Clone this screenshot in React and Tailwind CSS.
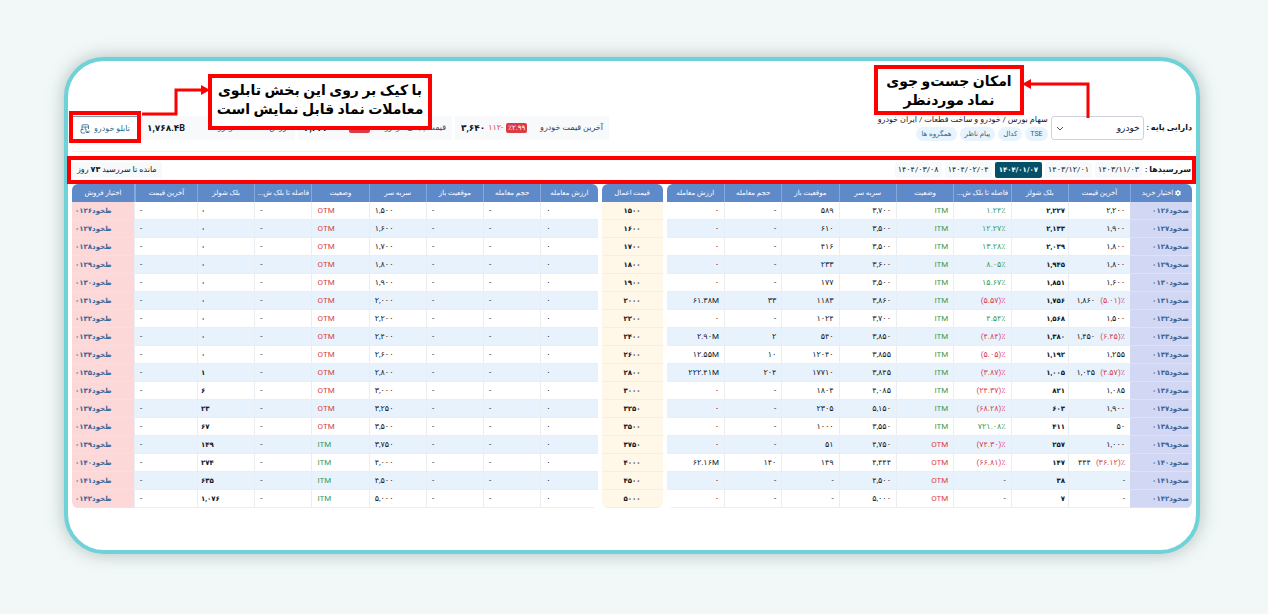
import { FaGear } from 'react-icons/fa6';

const columns = [
  'آخرین قیمت',
  'بلک شولز',
  'فاصله تا بلک ش...',
  'وضعیت',
  'سربه سر',
  'موقعیت باز',
  'حجم معامله',
  'ارزش معامله',
];

// code, last price, last change, black-scholes, distance, status, break even, open interest, volume, value
const calls = [
  ['۰۱۲۶', '۲,۲۰۰', '', '۲,۲۲۷', '۱.۲۴٪', 'ITM', '۳,۷۰۰', '۵۸۹', '-', '۰'],
  ['۰۱۲۷', '۱,۹۰۰', '', '۲,۱۳۳', '۱۲.۲۷٪', 'ITM', '۳,۵۰۰', '۶۱۰', '-', '۰'],
  ['۰۱۲۸', '۱,۸۰۰', '', '۲,۰۳۹', '۱۳.۲۸٪', 'ITM', '۳,۵۰۰', '۴۱۶', '-', '۰'],
  ['۰۱۲۹', '۱,۸۰۰', '', '۱,۹۴۵', '۸.۰۵٪', 'ITM', '۳,۶۰۰', '۲۳۳', '-', '۰'],
  ['۰۱۳۰', '۱,۶۰۰', '', '۱,۸۵۱', '۱۵.۶۷٪', 'ITM', '۳,۵۰۰', '۱۷۷', '-', '۰'],
  ['۰۱۳۱', '۱,۸۶۰', '(۵.۰۱)٪', '۱,۷۵۶', '(۵.۵۷)٪', 'ITM', '۳,۸۶۰', '۱۱۸۳', '۳۳', '۶۱.۳۸M'],
  ['۰۱۳۲', '۱,۵۰۰', '', '۱,۵۶۸', '۴.۵۴٪', 'ITM', '۳,۷۰۰', '۱۰۲۴', '-', '۰'],
  ['۰۱۳۳', '۱,۴۵۰', '(۶.۴۵)٪', '۱,۳۸۰', '(۴.۸۴)٪', 'ITM', '۳,۸۵۰', '۵۴۰', '۲', '۲.۹۰M'],
  ['۰۱۳۴', '۱,۲۵۵', '', '۱,۱۹۲', '(۵.۰۵)٪', 'ITM', '۳,۸۵۵', '۱۲۰۴۰', '۱۰', '۱۲.۵۵M'],
  ['۰۱۳۵', '۱,۰۴۵', '(۴.۵۷)٪', '۱,۰۰۵', '(۳.۸۷)٪', 'ITM', '۳,۸۴۵', '۱۷۷۱۰', '۲۰۴', '۲۲۲.۴۱M'],
  ['۰۱۳۶', '۱,۰۸۵', '', '۸۲۱', '(۲۴.۳۷)٪', 'ITM', '۴,۰۸۵', '۱۸۰۴', '-', '۰'],
  ['۰۱۳۷', '۱,۹۰۰', '', '۶۰۳', '(۶۸.۲۸)٪', 'ITM', '۵,۱۵۰', '۲۳۰۵', '-', '۰'],
  ['۰۱۳۸', '۵۰', '', '۴۱۱', '۷۲۱.۰۸٪', 'ITM', '۳,۵۵۰', '۱۰۰۰', '-', '۰'],
  ['۰۱۳۹', '۱,۰۰۰', '', '۲۵۷', '(۷۴.۳۰)٪', 'OTM', '۴,۷۵۰', '۵۱', '-', '۰'],
  ['۰۱۴۰', '۴۴۴', '(۳۶.۱۲)٪', '۱۴۷', '(۶۶.۸۱)٪', 'OTM', '۴,۴۴۴', '۱۴۹', '۱۴۰', '۶۲.۱۶M'],
  ['۰۱۴۱', '-', '', '۳۸', '-', 'OTM', '۴,۵۰۰', '-', '-', '۰'],
  ['۰۱۴۲', '-', '', '۷', '-', 'OTM', '۵,۰۰۰', '-', '-', '۰'],
];

const strikes = [
  '۱۵۰۰', '۱۶۰۰', '۱۷۰۰', '۱۸۰۰', '۱۹۰۰', '۲۰۰۰', '۲۲۰۰', '۲۴۰۰', '۲۶۰۰',
  '۲۸۰۰', '۳۰۰۰', '۳۲۵۰', '۳۵۰۰', '۳۷۵۰', '۴۰۰۰', '۴۵۰۰', '۵۰۰۰',
];

// code, black-scholes, status, break even
const puts = [
  ['۰۱۲۶', '۰', 'OTM', '۱,۵۰۰'],
  ['۰۱۲۷', '۰', 'OTM', '۱,۶۰۰'],
  ['۰۱۲۸', '۰', 'OTM', '۱,۷۰۰'],
  ['۰۱۲۹', '۰', 'OTM', '۱,۸۰۰'],
  ['۰۱۳۰', '۰', 'OTM', '۱,۹۰۰'],
  ['۰۱۳۱', '۰', 'OTM', '۲,۰۰۰'],
  ['۰۱۳۲', '۰', 'OTM', '۲,۲۰۰'],
  ['۰۱۳۳', '۰', 'OTM', '۲,۴۰۰'],
  ['۰۱۳۴', '۰', 'OTM', '۲,۶۰۰'],
  ['۰۱۳۵', '۱', 'OTM', '۲,۸۰۰'],
  ['۰۱۳۶', '۶', 'OTM', '۳,۰۰۰'],
  ['۰۱۳۷', '۲۳', 'OTM', '۳,۲۵۰'],
  ['۰۱۳۸', '۶۷', 'OTM', '۳,۵۰۰'],
  ['۰۱۳۹', '۱۴۹', 'ITM', '۳,۷۵۰'],
  ['۰۱۴۰', '۲۷۴', 'ITM', '۴,۰۰۰'],
  ['۰۱۴۱', '۶۳۵', 'ITM', '۴,۵۰۰'],
  ['۰۱۴۲', '۱,۰۷۶', 'ITM', '۵,۰۰۰'],
];

const dates = ['۱۴۰۳/۱۱/۰۳', '۱۴۰۳/۱۲/۰۱', '۱۴۰۴/۰۱/۰۷', '۱۴۰۴/۰۲/۰۴', '۱۴۰۴/۰۳/۰۸'];

const statusColor = (status) => (status === 'ITM' ? 'text-[#3f9a53]' : 'text-[#d9414e]');

function distanceColor(value) {
  if (value === '-') return 'text-gray-800';
  return value.startsWith('(') ? 'text-[#d9414e]' : 'text-[#3f9a53]';
}

function HeadCell({ className = '', children }) {
  return (
    <th scope="col" className={`h-[18px] border-l border-[#86a8dc] p-0 text-center font-normal last:border-l-0 ${className}`}>
      {children}
    </th>
  );
}

function Cell({ className = 'px-[5px]', children }) {
  return (
    <td className={`h-[18px] border-b border-l border-[#e9eef2] py-0 last:border-l-0 ${className}`}>
      <span dir="ltr">{children}</span>
    </td>
  );
}

function CallTable() {
  return (
    <div className="min-w-0 flex-1 overflow-hidden rounded-md">
      <table className="w-full table-fixed border-separate border-spacing-0 whitespace-nowrap text-right">
        <thead className="bg-[#5e8aca] text-[7px] text-white">
          <tr>
            <HeadCell className="w-[62px]">
              <span className="flex items-center justify-center gap-[2px]">
                <FaGear className="size-[6px]" />
                اختیار خرید
              </span>
            </HeadCell>
            <HeadCell className="w-[62px]">{columns[0]}</HeadCell>
            {columns.slice(1).map((column) => (
              <HeadCell key={column}>{column}</HeadCell>
            ))}
          </tr>
        </thead>
        <tbody>
          {calls.map(([code, last, change, bs, distance, status, even, open, volume, value]) => (
            <tr key={code} className="even:bg-[#e8f2fd]">
              <th scope="row" className="h-[18px] border-b border-[#dde3f6] bg-[#d2d8f4] px-[3px] py-0 text-right text-[7px] font-bold text-[#3b6596]">
                ضخود{code}
              </th>
              <Cell>
                {last}
                {change && <span className="ml-[5px] text-[#d9414e]">{change}</span>}
              </Cell>
              <Cell className="px-[3px] text-[7px] font-bold">{bs}</Cell>
              <Cell className={`px-[5px] ${distanceColor(distance)}`}>{distance}</Cell>
              <Cell className={`px-[5px] ${statusColor(status)}`}>{status}</Cell>
              <Cell>{even}</Cell>
              <Cell>{open}</Cell>
              <Cell>{volume}</Cell>
              <Cell>{value}</Cell>
            </tr>
          ))}
        </tbody>
      </table>
    </div>
  );
}

function StrikeTable() {
  return (
    <div className="w-[61px] shrink-0 overflow-hidden rounded-md">
      <table className="w-full table-fixed border-separate border-spacing-0 text-center text-[7px]">
        <thead className="bg-[#5e8aca] text-white">
          <tr>
            <HeadCell>قیمت اعمال</HeadCell>
          </tr>
        </thead>
        <tbody>
          {strikes.map((strike) => (
            <tr key={strike}>
              <td className="h-[18px] border-b border-[#f3efe6] bg-[#fff7e8] p-0 font-bold">{strike}</td>
            </tr>
          ))}
        </tbody>
      </table>
    </div>
  );
}

function PutTable() {
  return (
    <div className="min-w-0 flex-1 overflow-hidden rounded-md">
      <table className="w-full table-fixed border-separate border-spacing-0 whitespace-nowrap text-left">
        <thead className="bg-[#5e8aca] text-[7px] text-white">
          <tr>
            {columns.slice(1).reverse().map((column) => (
              <HeadCell key={column}>{column}</HeadCell>
            ))}
            <HeadCell className="w-[63px] border-l-2">{columns[0]}</HeadCell>
            <HeadCell className="w-[62px]">اختیار فروش</HeadCell>
          </tr>
        </thead>
        <tbody>
          {puts.map(([code, bs, status, even]) => (
            <tr key={code} className="even:bg-[#e8f2fd]">
              <Cell>۰</Cell>
              <Cell>-</Cell>
              <Cell>-</Cell>
              <Cell>{even}</Cell>
              <Cell className={`px-[5px] ${statusColor(status)}`}>{status}</Cell>
              <Cell>-</Cell>
              <Cell className="px-[3px] text-[7px] font-bold">{bs}</Cell>
              <Cell>-</Cell>
              <th scope="row" className="h-[18px] border-b border-[#f5dfe2] bg-[#fdd8d9] px-[3px] py-0 text-left text-[7px] font-bold text-[#3b6596]">
                طخود{code}
              </th>
            </tr>
          ))}
        </tbody>
      </table>
    </div>
  );
}

function PriceBox({ label, value, change, percent }) {
  return (
    <div className="flex h-6 w-[154px] items-center justify-between bg-[#f7f9fb] px-[6px]">
      <span className="text-[8px] text-gray-700">{label}</span>
      <span dir="ltr" className="flex items-center gap-[3px]">
        <b className="text-[9px]">{value}</b>
        {change && <span className="text-[8px] text-[#d9414e]">{change}</span>}
        {percent && (
          <span className="flex h-[10px] items-center rounded-[2px] bg-[#dc3a44] px-[2px] text-[7px] text-white">
            {percent}
          </span>
        )}
      </span>
    </div>
  );
}

function BoardIcon() {
  return (
    <svg viewBox="0 0 20 20" className="size-[10px]" fill="none" stroke="currentColor" strokeWidth="1.6" aria-hidden="true">
      <path d="M4 11V3.500Q4 1.500 6 1.500H15Q17 1.500 17 3.500V10M4 6H17M10.500 6V11M7 11H2V16Q2 18 4 18H10" />
      <path d="M12 10v7M12 17h6M18 17v-4M15 17v-3" />
    </svg>
  );
}

export default function App() {
  return (
    <div dir="rtl" className="min-h-screen bg-[#f2f8f8] px-16 pt-[57px] pb-[61px] font-[Roboto,'DejaVu_Sans',sans-serif] text-[8px] leading-[10px] text-gray-900 lg:pr-[68px]">
      <main className="relative rounded-[40px] border-4 border-[#6fd2d8] bg-white px-1 pt-[54px] pb-[42px] shadow-[0_0_18px_rgba(80,100,100,0.4)]">
        <header className="flex items-center gap-[3px] border-b border-[#eef0f2] pb-[10px]">
          <label htmlFor="asset" className="text-[8px] font-bold">دارایی پایه :</label>
          <div className="relative">
            <select id="asset" className="h-6 w-[93px] appearance-none rounded-[3px] border border-[#cfd2dc] bg-white px-[3px] text-[9px]">
              <option>خودرو</option>
            </select>
            <svg viewBox="0 0 8 5" className="pointer-events-none absolute top-[10px] left-[5px] h-[5px] w-2" fill="none" stroke="#555" aria-hidden="true">
              <path d="M1 1l3 3 3-3" />
            </svg>
          </div>
          <div className="flex flex-col gap-[2px]">
            <span className="text-[8px]">سهام بورس / خودرو و ساخت قطعات / ایران خودرو</span>
            <nav className="flex gap-[3px] text-[7px] text-[#2c6280]">
              <a href="#tse" className="rounded-full bg-[#e8f4fd] px-[5px] py-[2px]">TSE</a>
              <a href="#codal" className="rounded-full bg-[#e8f4fd] px-[5px] py-[2px]">کدال</a>
              <a href="#messages" className="rounded-full bg-[#e8f4fd] px-[5px] py-[2px]">پیام ناظر</a>
              <a href="#peers" className="rounded-full bg-[#e8f4fd] px-[5px] py-[2px]">همگروه ها</a>
            </nav>
          </div>
          <div className="mr-auto flex items-center gap-[3px]">
            <PriceBox label="آخرین قیمت خودرو" value="۳,۶۴۰" change="۱۱۲-" percent="٪۲.۹۹" />
            <PriceBox label="قیمت پایانی خودرو" value="۳,۶۴۲" change="۱۱۰-" percent="٪۲.۹۳" />
            <PriceBox label="ارزش معاملات خودرو" value="۱,۷۶۸.۴B" />
            <button type="button" className="flex h-6 w-[66px] items-center justify-center gap-1 border-t border-[#6f9fb0] bg-white text-[8px] text-[#2b6a85]">
              تابلو خودرو
              <BoardIcon />
            </button>
          </div>
        </header>

        <section className="-mr-1 mt-[4px] -ml-[5px] flex h-7 items-center gap-[3px] border-4 border-[#fe0000] px-[1px]">
          <h2 className="text-[8px] font-bold">سررسیدها :</h2>
          {dates.map((date) => (
            <button
              key={date}
              type="button"
              className={
                date === '۱۴۰۴/۰۱/۰۷'
                  ? 'h-4 rounded-[2px] bg-[#064f69] px-1 text-[7px] font-bold text-white'
                  : 'h-4 rounded-[2px] bg-[#f7f9fb] px-[3px] text-[8px]'
              }
            >
              {date}
            </button>
          ))}
          <span className="mr-auto bg-[#f7f9fb] px-[5px] py-[3px] text-[8px]">
            مانده تا سررسید <b>۷۳</b> روز
          </span>
        </section>

        <section className="flex gap-1">
          <CallTable />
          <StrikeTable />
          <PutTable />
        </section>

        {/* Guide callouts */}
        <div className="absolute top-[50px] left-[1px] h-8 w-[72px] border-4 border-[#fe0000]" />
        <svg className="absolute top-[22px] left-[73px] h-9 w-[70px]" viewBox="0 0 70 36" fill="none" aria-hidden="true">
          <path d="M1 31H35V7H60" stroke="#fe0000" strokeWidth="3" />
          <path d="M60 2l9 5-9 5z" fill="#fe0000" />
        </svg>
        <p className="absolute top-[13px] left-[140px] h-14 w-[224px] border-4 border-[#fe0000] bg-white pt-[3px] text-center text-[14px] leading-[19px] font-bold whitespace-nowrap text-black">
          با کیک بر روی این بخش تابلوی
          <br />
          معاملات نماد قابل نمایش است
        </p>
        <p className="absolute top-1 right-[172px] h-[50px] w-[150px] border-4 border-[#fe0000] bg-white pt-[3px] text-center text-[14px] leading-[19px] font-bold text-black">
          امکان جست‌و جوی
          <br />
          نماد موردنظر
        </p>
        <svg className="absolute top-[17px] right-[105px] h-10 w-[69px]" viewBox="0 0 69 40" fill="none" aria-hidden="true">
          <path d="M66 40V6H9" stroke="#fe0000" strokeWidth="3" />
          <path d="M9 1L0 6l9 5z" fill="#fe0000" />
        </svg>
      </main>
    </div>
  );
}
